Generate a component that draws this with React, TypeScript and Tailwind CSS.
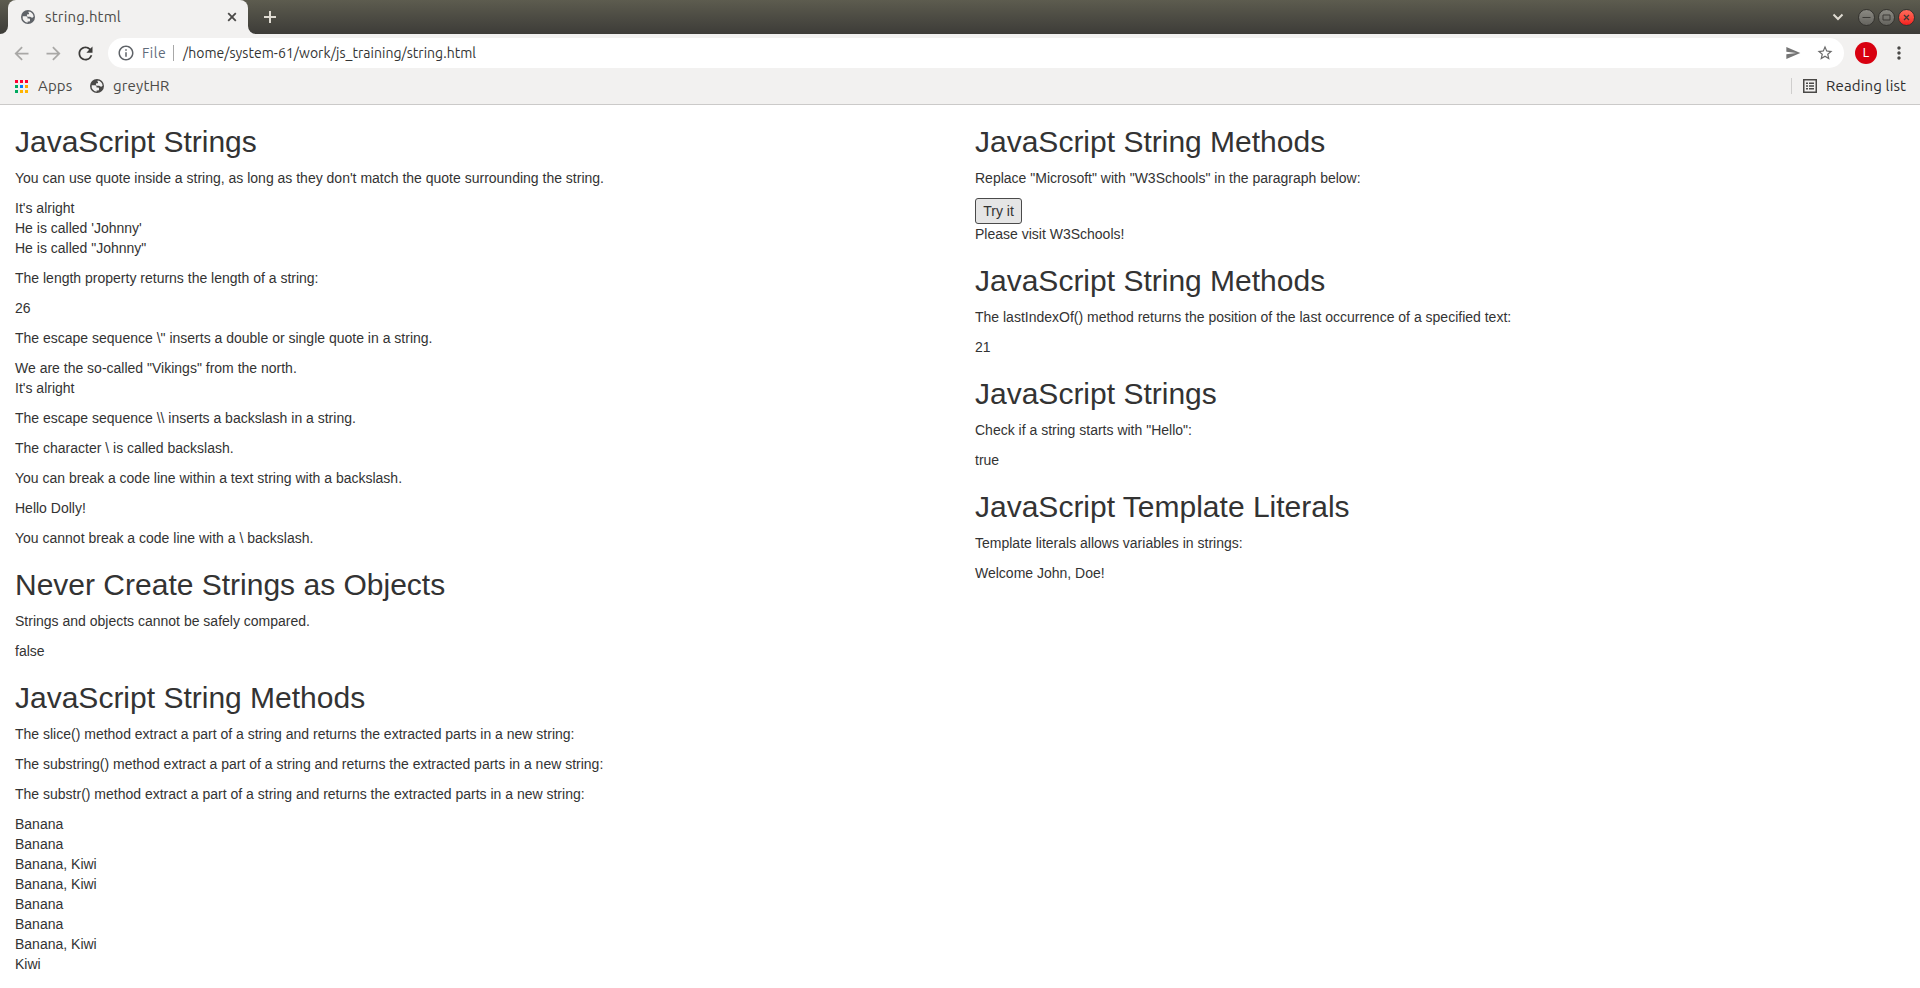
import type { ReactNode } from "react";
import { MdArrowBack, MdArrowForward, MdRefresh, MdOutlineInfo, MdSend, MdStarBorder, MdMoreVert, MdAdd } from "react-icons/md";

const Globe = ({ className }: { className: string }) => (
  <svg viewBox="0 0 16 16" className={className} fill="currentColor">
    <path fillRule="evenodd" d="M8 1a7 7 0 1 0 0 14A7 7 0 0 0 8 1zM2.700 7.200h2.800c1.300 0 2 .7 2 1.500v.9h1.300c.8 0 1.200.4 1.200 1v.9c0 .6-.4 1-1 1H7.600v1.200A5.600 5.600 0 0 1 2.700 7.200zM8.700 2.500c2.700.3 4.800 2.600 4.900 5.200l-1 .8c-.3.300-.8.300-1.200.100l-1.200-.9H8.300c-.8 0-1.400-.6-1.400-1.300 0-.7.5-1.200 1.200-1.200h.9V4c0-.4-.3-.6-.7-.6z" />
  </svg>
);

const H = ({ children }: { children: ReactNode }) => (
  <h2 className="mt-5 mb-2.5 text-[30px] leading-[33px] font-medium">{children}</h2>
);

const P = ({ lines }: { lines: string[] }) => (
  <p className="mb-2.5">
    {lines.map((line, i) => (
      <span key={i} className="block">{line}</span>
    ))}
  </p>
);

const appColors = [
  "bg-[#ff0031]", "bg-[#ff0031]", "bg-[#ff0031]",
  "bg-[#00a95f]", "bg-[#007bff]", "bg-[#ffa400]",
  "bg-[#00a95f]", "bg-[#ffb400]", "bg-[#ffb400]",
];

const WindowButton = ({ tone, children }: { tone: string; children: ReactNode }) => (
  <span className={`flex size-[17px] items-center justify-center rounded-full border border-[#34332f] ${tone}`}>
    <svg viewBox="0 0 15 15" className="size-[15px] shrink-0" fill="none" stroke="#3c3b37">{children}</svg>
  </span>
);

function TabStrip() {
  return (
    <div className="flex h-[34px] items-stretch bg-linear-to-b from-[#5d5c4f] to-[#3d3c38]">
      <div className="w-2 bg-[#f2f1f0]">
        <div className="h-full w-full rounded-br-lg bg-linear-to-b from-[#5d5c4f] to-[#3d3c38]" />
      </div>
      <div className="flex w-60 items-center rounded-t-lg bg-[#f2f1f0] pl-3">
        <Globe className="size-4 text-[#5f6368]" />
        <span className="ml-[9px] w-[182px] tracking-[0.18px]">string.html</span>
        <svg viewBox="0 0 10 10" className="size-2.5" fill="none" stroke="#4a4947" strokeWidth="1.800">
          <path d="m1.200 1.200 7.600 7.600m0-7.600L1.200 8.800" />
        </svg>
      </div>
      <div className="w-2 bg-[#f2f1f0]">
        <div className="h-full w-full rounded-bl-lg bg-linear-to-b from-[#5d5c4f] to-[#3d3c38]" />
      </div>
      <svg viewBox="0 0 12 12" className="mt-[11px] ml-2 size-3" fill="none" stroke="#dfdbd2" strokeWidth="2">
        <path d="M6 0v12M0 6h12" />
      </svg>
      <div className="ml-auto flex items-center gap-[3px] pr-[5px]">
        <svg viewBox="0 0 12 8" className="mr-[11px] h-2 w-3" fill="none" stroke="#dfdbd2" strokeWidth="2">
          <path d="M1.500 1.500 6 6l4.500-4.500" />
        </svg>
        <WindowButton tone="bg-linear-to-b from-[#8b8a83] to-[#65645f]"><path d="M3.500 7.500h8" /></WindowButton>
        <WindowButton tone="bg-linear-to-b from-[#8b8a83] to-[#65645f]"><path d="M4 5h7v5H4z" /></WindowButton>
        <WindowButton tone="bg-linear-to-b from-[#ff6a5a] to-[#f5191c]"><path d="m5 5 5 5m0-5-5 5" strokeWidth="1.300" /></WindowButton>
      </div>
    </div>
  );
}

function Toolbar() {
  return (
    <div className="flex h-[38px] items-center pl-[11px]">
      <MdArrowBack className="size-[21px] text-[#a9a8a6]" />
      <MdArrowForward className="ml-[11px] size-[21px] text-[#a9a8a6]" />
      <MdRefresh className="ml-[11px] size-[21px] text-[#3d3c3a]" />
      <div className="ml-3 flex h-[30px] w-[1736px] items-center rounded-full bg-white pr-2.5 pl-[9px]">
        <MdOutlineInfo className="size-[18px] text-[#5f6368]" />
        <span className="ml-[7px] w-[31px] text-[14px] tracking-[0.5px] text-[#5f6b7b]">File</span>
        <span className="h-4 w-px bg-[#a8a8a8]" />
        <span className="ml-[9px] text-[14px] tracking-[0.035px] text-[#333]">/home/system-61/work/js_training/string.html</span>
        <MdSend className="ml-auto size-4 text-[#757575]" />
        <MdStarBorder className="ml-[15px] size-[18px] text-[#6a6a6a]" />
      </div>
      <span className="ml-[11px] flex size-[22px] items-center justify-center rounded-full bg-[#d80010] font-[Roboto,sans-serif] text-[12px] text-white">L</span>
      <MdMoreVert className="ml-3 size-5 text-[#4a4947]" />
    </div>
  );
}

function BookmarksBar() {
  return (
    <div className="flex h-[33px] items-center border-b border-[#cbcac9] pb-1 pl-[15px]">
      <div className="grid grid-cols-3 gap-[2px]">
        {appColors.map((color, i) => (
          <span key={i} className={`size-[3px] ${color}`} />
        ))}
      </div>
      <span className="ml-[10px] w-[51px] tracking-[0.15px]">Apps</span>
      <Globe className="size-4 text-[#4a4947]" />
      <span className="ml-2 tracking-[0.15px]">greytHR</span>
      <span className="ml-auto h-4 w-px bg-[#cfcecd]" />
      <svg viewBox="0 0 14 14" className="ml-[11px] size-[14px]" fill="none" stroke="#4a4947">
        <path d="M.75.75h12.500v12.500H.75z" strokeWidth="1.500" />
        <path d="M3 4.200h2M3 7h2M3 9.800h2M6 4.200h5M6 7h5M6 9.800h5" strokeWidth="1.500" />
      </svg>
      <span className="ml-[9px] w-[94px] tracking-[0.15px] text-[#2d2d2d]">Reading list</span>
    </div>
  );
}

export default function App() {
  return (
    <div className="flex h-[988px] w-[1920px] flex-col overflow-hidden bg-white">
      <header className="flex shrink-0 flex-col bg-[#f2f1f0] font-[Ubuntu,'Noto_Sans',sans-serif] text-[15px] leading-5 text-[#4c4b48]">
        <TabStrip />
        <Toolbar />
        <BookmarksBar />
      </header>
      <main className="grid grow grid-cols-2 font-['Liberation_Sans',Arial,sans-serif] text-sm leading-5 text-[#333]">
        <section className="px-[15px]">
          <H>JavaScript Strings</H>
          <P lines={["You can use quote inside a string, as long as they don't match the quote surrounding the string."]} />
          <P lines={["It's alright", "He is called 'Johnny'", 'He is called "Johnny"']} />
          <P lines={["The length property returns the length of a string:"]} />
          <P lines={["26"]} />
          <P lines={['The escape sequence \\" inserts a double or single quote in a string.']} />
          <P lines={['We are the so-called "Vikings" from the north.', "It's alright"]} />
          <P lines={["The escape sequence \\\\ inserts a backslash in a string."]} />
          <P lines={["The character \\ is called backslash."]} />
          <P lines={["You can break a code line within a text string with a backslash."]} />
          <P lines={["Hello Dolly!"]} />
          <P lines={["You cannot break a code line with a \\ backslash."]} />
          <H>Never Create Strings as Objects</H>
          <P lines={["Strings and objects cannot be safely compared."]} />
          <P lines={["false"]} />
          <H>JavaScript String Methods</H>
          <P lines={["The slice() method extract a part of a string and returns the extracted parts in a new string:"]} />
          <P lines={["The substring() method extract a part of a string and returns the extracted parts in a new string:"]} />
          <P lines={["The substr() method extract a part of a string and returns the extracted parts in a new string:"]} />
          <P lines={["Banana", "Banana", "Banana, Kiwi", "Banana, Kiwi", "Banana", "Banana", "Banana, Kiwi", "Kiwi"]} />
        </section>
        <section className="px-[15px]">
          <H>JavaScript String Methods</H>
          <P lines={['Replace "Microsoft" with "W3Schools" in the paragraph below:']} />
          <button className="block h-[26px] w-[47px] rounded-[3px] border border-[#4a4a4a] bg-[#e5e5e5]">Try it</button>
          <P lines={["Please visit W3Schools!"]} />
          <H>JavaScript String Methods</H>
          <P lines={["The lastIndexOf() method returns the position of the last occurrence of a specified text:"]} />
          <P lines={["21"]} />
          <H>JavaScript Strings</H>
          <P lines={['Check if a string starts with "Hello":']} />
          <P lines={["true"]} />
          <H>JavaScript Template Literals</H>
          <P lines={["Template literals allows variables in strings:"]} />
          <P lines={["Welcome John, Doe!"]} />
        </section>
      </main>
    </div>
  );
}
